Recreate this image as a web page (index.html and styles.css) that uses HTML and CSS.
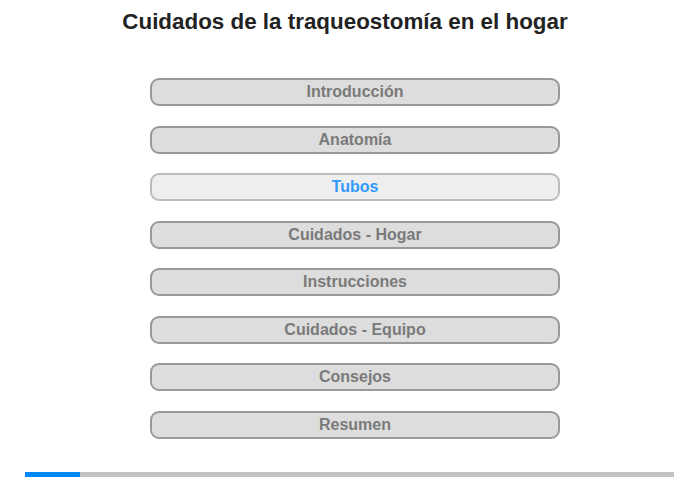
FILE: index.html
```html
<!DOCTYPE html>
<html lang="es">
<head>
<meta charset="utf-8">
<title>Cuidados de la traqueostomía en el hogar</title>
<link rel="stylesheet" href="styles.css">
</head>
<body>
<div class="page">
  <h1 class="title">Cuidados de la traqueostomía en el hogar</h1>
  <nav class="menu">
    <div class="item">Introducción</div>
    <div class="item">Anatomía</div>
    <div class="item active">Tubos</div>
    <div class="item">Cuidados - Hogar</div>
    <div class="item">Instrucciones</div>
    <div class="item">Cuidados - Equipo</div>
    <div class="item">Consejos</div>
    <div class="item">Resumen</div>
  </nav>
  <div class="progress"><div class="progress-fill" style="width:55px"></div></div>
</div>
</body>
</html>
```
FILE: styles.css
```css
html, body {
  margin: 0;
  padding: 0;
  background: #fff;
}
.page {
  width: 700px;
  height: 480px;
  font-family: "Liberation Sans", Arial, sans-serif;
  display: flex;
  flex-direction: column;
}
.title {
  margin: 9px 0 0 0;
  font-size: 22.4px;
  line-height: 26px;
  font-weight: bold;
  color: #222;
  text-align: center;
  width: 690px;
}
.menu {
  margin: 43px 0 0 150px;
  display: flex;
  flex-direction: column;
  gap: 19.5px;
  width: 410px;
}
.item {
  box-sizing: border-box;
  height: 28px;
  border: 2px solid #999;
  border-radius: 9px;
  background: #ddd;
  color: #7a7a7a;
  font-size: 16px;
  font-weight: bold;
  line-height: 24px;
  text-align: center;
}
.item.active {
  background: #eee;
  border-color: #bbb;
  color: #3399ff;
}
.progress {
  margin: 33px 0 0 25px;
  width: 649px;
  height: 5px;
  background: #c2c2c2;
}
.progress-fill {
  height: 100%;
  background: #0088ff;
}
```
